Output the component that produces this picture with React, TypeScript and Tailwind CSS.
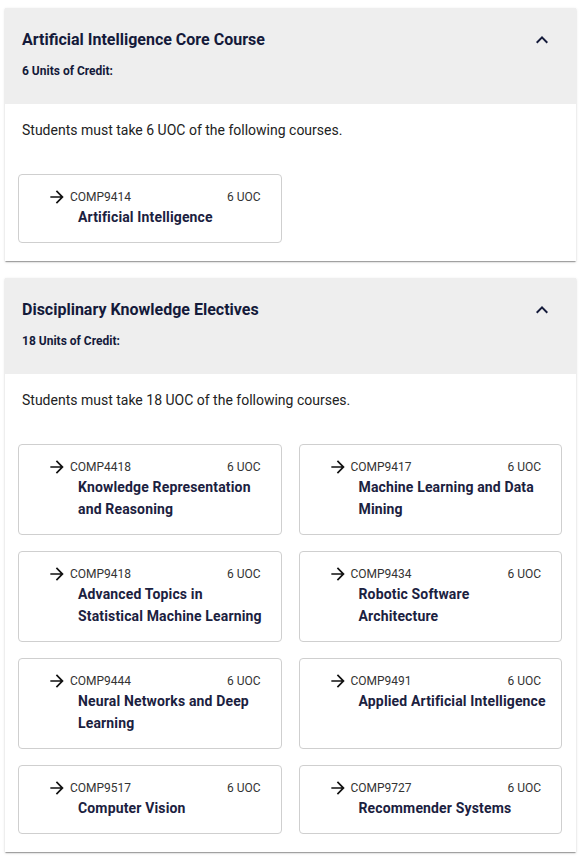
import React from 'react';

interface Course {
  code: string;
  title: string;
  uoc: number;
}

interface Section {
  title: string;
  uoc: number;
  courses: Course[];
}

const sections: Section[] = [
  {
    title: 'Artificial Intelligence Core Course',
    uoc: 6,
    courses: [{ code: 'COMP9414', title: 'Artificial Intelligence', uoc: 6 }],
  },
  {
    title: 'Disciplinary Knowledge Electives',
    uoc: 18,
    courses: [
      { code: 'COMP4418', title: 'Knowledge Representation and Reasoning', uoc: 6 },
      { code: 'COMP9417', title: 'Machine Learning and Data Mining', uoc: 6 },
      { code: 'COMP9418', title: 'Advanced Topics in Statistical Machine Learning', uoc: 6 },
      { code: 'COMP9434', title: 'Robotic Software Architecture', uoc: 6 },
      { code: 'COMP9444', title: 'Neural Networks and Deep Learning', uoc: 6 },
      { code: 'COMP9491', title: 'Applied Artificial Intelligence', uoc: 6 },
      { code: 'COMP9517', title: 'Computer Vision', uoc: 6 },
      { code: 'COMP9727', title: 'Recommender Systems', uoc: 6 },
    ],
  },
];

const ArrowIcon = () => (
  <svg width="20" height="20" viewBox="0 0 24 24" className="shrink-0 fill-[#111]">
    <path d="M12 4l-1.41 1.41L16.17 11H4v2h12.17l-5.58 5.59L12 20l8-8z" />
  </svg>
);

const ChevronUp = () => (
  <svg width="24" height="24" viewBox="0 0 24 24" className="fill-[#141a3a]">
    <path d="M12 8l-6 6 1.41 1.41L12 10.83l4.59 4.58L18 14z" />
  </svg>
);

const CourseCard: React.FC<{ course: Course }> = ({ course }) => (
  <div className="rounded-[4px] border border-[#cfcfcf] bg-white pt-[13px] pb-[14px] pl-[28px] pr-[20px]">
    <div className="flex items-center h-[18px]">
      <ArrowIcon />
      <span className="ml-[3px] text-[12px] leading-[18px] text-[#333]">{course.code}</span>
      <span className="ml-auto text-[12px] leading-[18px] text-[#333]">{course.uoc} UOC</span>
    </div>
    <div className="pl-[31px] -mr-[10px] text-[14px] leading-[22px] font-bold tracking-[0.15px] text-[#1b2140]">
      {course.title}
    </div>
  </div>
);

const SectionPanel: React.FC<{ section: Section }> = ({ section }) => (
  <div className="bg-white shadow-[0_2px_1px_-1px_rgba(0,0,0,0.2),0_1px_1px_0_rgba(0,0,0,0.14),0_1px_3px_0_rgba(0,0,0,0.12)]">
    <div className="bg-[#eeeeee] flex items-start justify-between pl-[17px] pr-[22px] pt-[20px] pb-[24px]">
      <div>
        <div className="text-[16px] leading-6 font-bold text-[#141a3a]">{section.title}</div>
        <div className="mt-[10px] text-[12px] leading-[18px] font-bold text-[#141a3a]">
          {section.uoc} Units of Credit:
        </div>
      </div>
      <ChevronUp />
    </div>
    <div className="pl-[13px] pr-[14px] pt-[16px] pb-[18px]">
      <p className="pl-[4px] text-[14px] leading-5 text-[#222]">
        Students must take {section.uoc} UOC of the following courses.
      </p>
      <div className="mt-[34px] grid grid-cols-2 gap-x-[17px] gap-y-[16px]">
        {section.courses.map(c => (
          <CourseCard key={c.code} course={c} />
        ))}
      </div>
    </div>
  </div>
);

export default function App() {
  return (
    <div className="min-h-screen bg-white px-[5px] pt-[8px] font-['Roboto','Liberation_Sans',sans-serif]">
      <div className="flex flex-col gap-[17px] w-[571px]">
        {sections.map(s => (
          <SectionPanel key={s.title} section={s} />
        ))}
      </div>
    </div>
  );
}
